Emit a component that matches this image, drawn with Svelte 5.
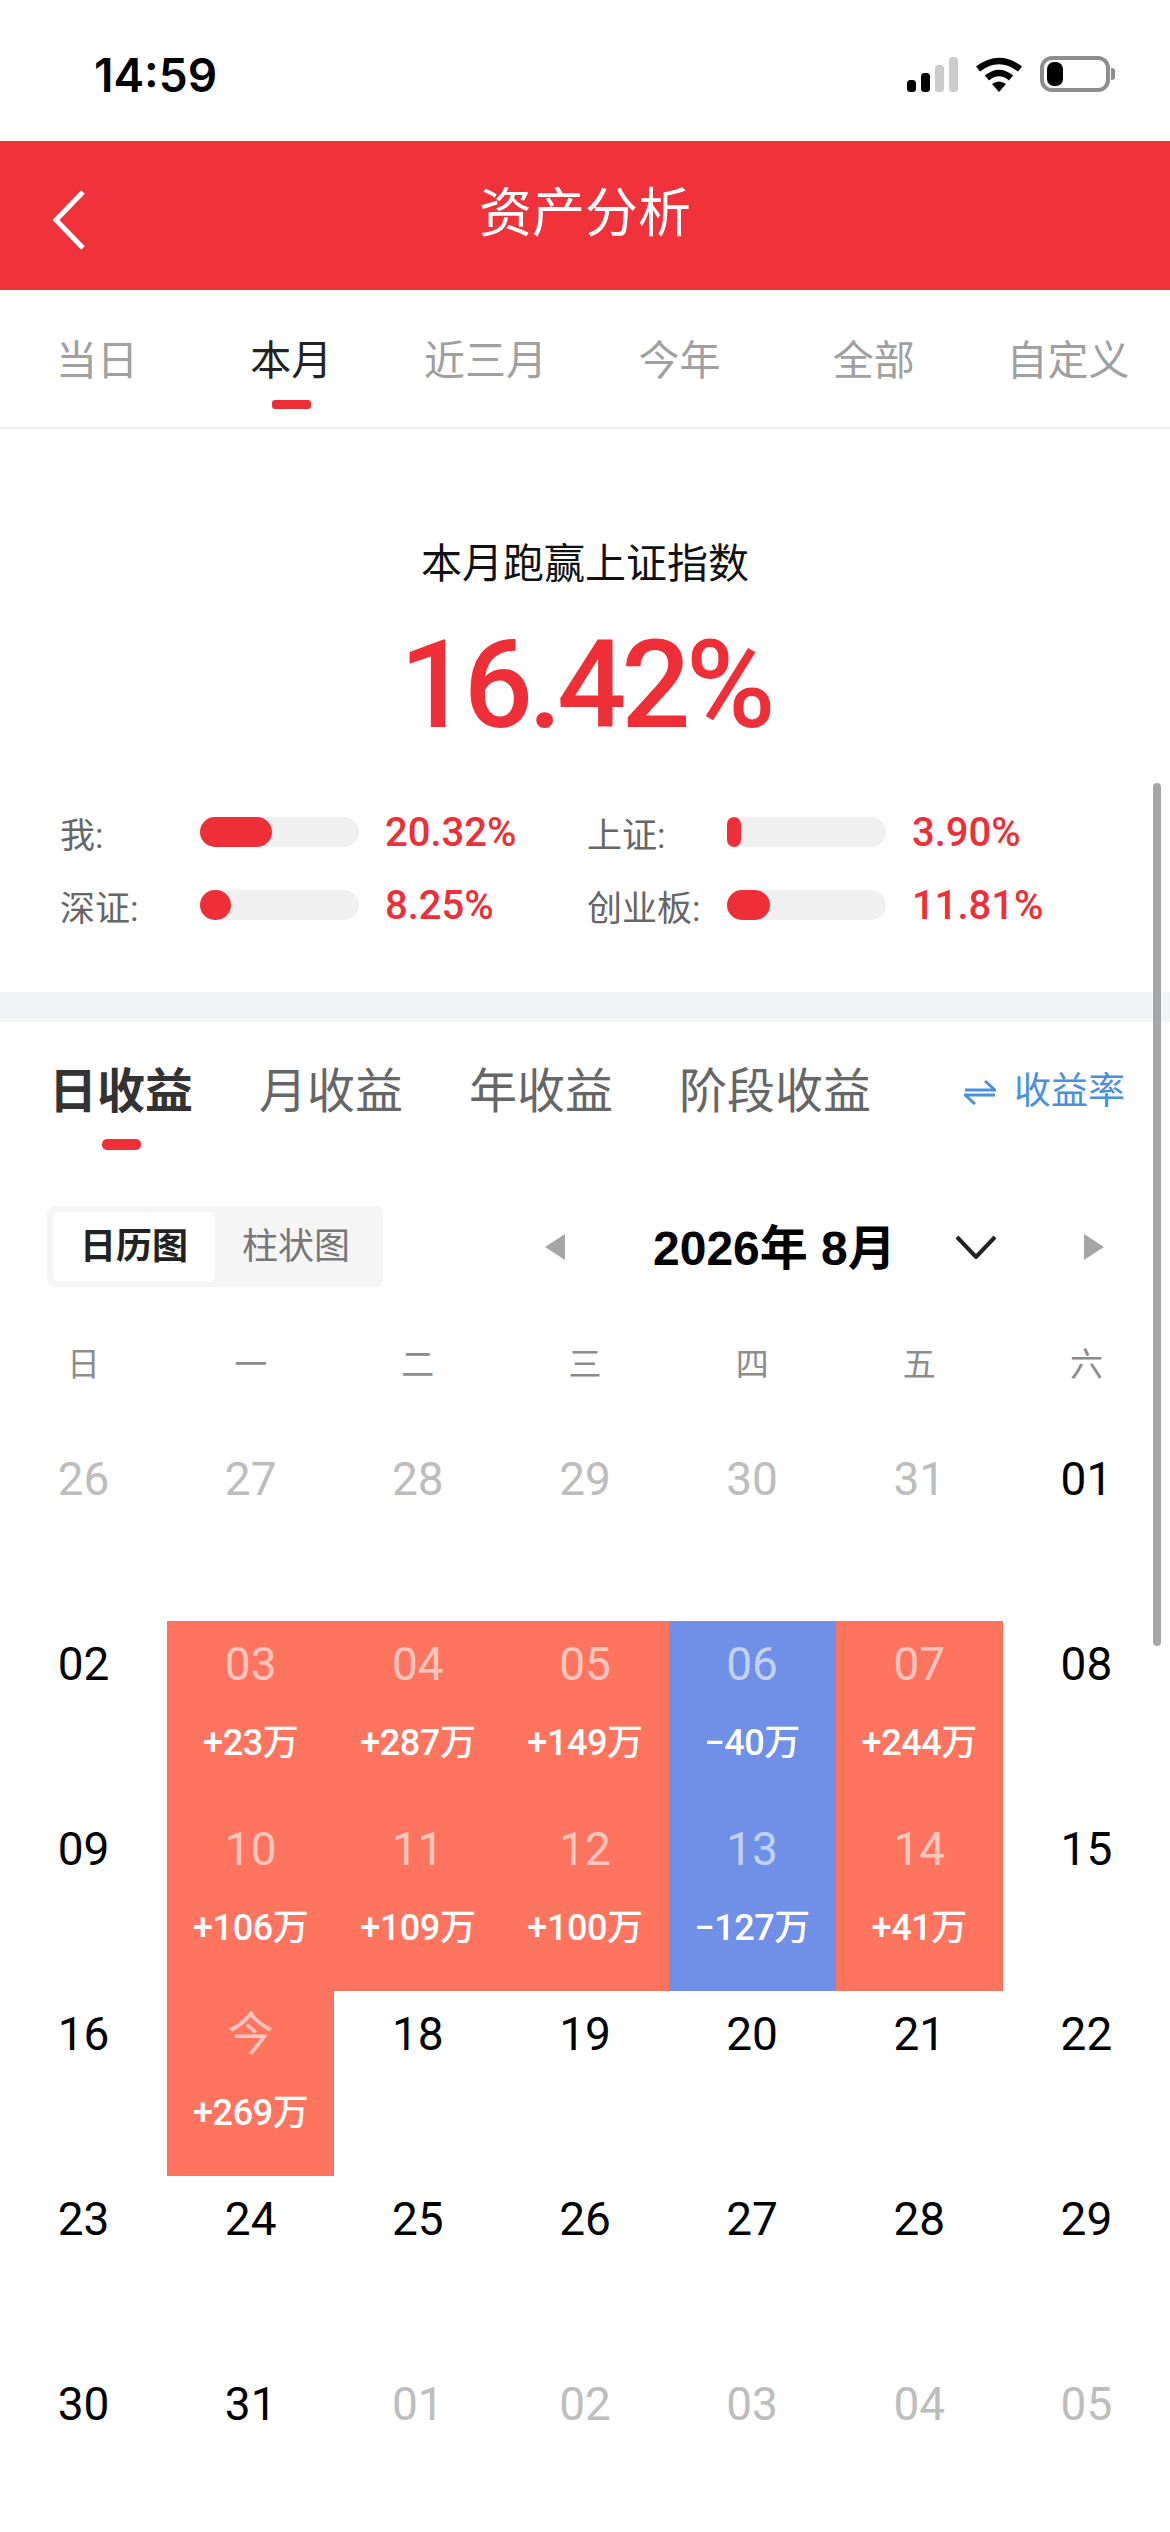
<script>
	const periods = ["当日", "本月", "近三月", "今年", "全部", "自定义"];
	const compare = [
		{ label: "我:", value: "20.32%", fill: 72 },
		{ label: "上证:", value: "3.90%", fill: 14 },
		{ label: "深证:", value: "8.25%", fill: 31 },
		{ label: "创业板:", value: "11.81%", fill: 43 },
	];
	const profitTabs = ["日收益", "月收益", "年收益", "阶段收益"];
	const weekdays = ["日", "一", "二", "三", "四", "五", "六"];

	const days = [
		{ d: "26", off: true }, { d: "27", off: true }, { d: "28", off: true }, { d: "29", off: true }, { d: "30", off: true }, { d: "31", off: true }, { d: "01" },
		{ d: "02" }, { d: "03", v: "+23万" }, { d: "04", v: "+287万" }, { d: "05", v: "+149万" }, { d: "06", v: "−40万", loss: true }, { d: "07", v: "+244万" }, { d: "08" },
		{ d: "09" }, { d: "10", v: "+106万" }, { d: "11", v: "+109万" }, { d: "12", v: "+100万" }, { d: "13", v: "−127万", loss: true }, { d: "14", v: "+41万" }, { d: "15" },
		{ d: "16" }, { d: "今", v: "+269万" }, { d: "18" }, { d: "19" }, { d: "20" }, { d: "21" }, { d: "22" },
		{ d: "23" }, { d: "24" }, { d: "25" }, { d: "26" }, { d: "27" }, { d: "28" }, { d: "29" },
		{ d: "30" }, { d: "31" }, { d: "01", off: true }, { d: "02", off: true }, { d: "03", off: true }, { d: "04", off: true }, { d: "05", off: true },
	];
</script>

<div class="page">
	<div class="status">
		<span class="time">14:59</span>
		<div class="status-icons">
			<svg width="51" height="35" viewBox="0 0 51 35">
				<rect x="0" y="23" width="9" height="12" rx="3.5" fill="#000" />
				<rect x="14" y="16" width="9" height="19" rx="3.5" fill="#000" />
				<rect x="28" y="8" width="9" height="27" rx="3.5" fill="#ccc" />
				<rect x="42" y="0" width="9" height="35" rx="3.5" fill="#ccc" />
			</svg>
			<svg class="wifi" width="48" height="37" viewBox="0 0 48 37">
				<path d="M3 13 Q24 -3 45 13" fill="none" stroke="#000" stroke-width="6.5" />
				<path d="M12 22 Q24 12 36 22" fill="none" stroke="#000" stroke-width="6.5" />
				<path d="M17 28 Q24 23 31 28 L24 36 Z" fill="#000" />
			</svg>
			<div class="battery"><div class="battery-level"></div></div>
			<div class="battery-nub"></div>
		</div>
	</div>

	<div class="nav">
		<svg class="back" width="34" height="60" viewBox="0 0 34 60">
			<path d="M31 2 L4 30 L31 58" fill="none" stroke="#fff" stroke-width="5" />
		</svg>
		<h1>资产分析</h1>
	</div>

	<div class="periods">
		{#each periods as p, i}
			<div class="period" class:active={i === 1}>{p}</div>
		{/each}
	</div>

	<div class="summary">
		<div class="summary-title">本月跑赢上证指数</div>
		<div class="big">16.42%</div>
		<div class="compare">
			{#each compare as c}
				<div class="compare-item">
					<span class="compare-label">{c.label}</span>
					<div class="track"><div class="fill" style="width: {c.fill}px"></div></div>
					<span class="compare-value">{c.value}</span>
				</div>
			{/each}
		</div>
	</div>

	<div class="band"></div>

	<div class="profit-tabs">
		{#each profitTabs as t, i}
			<div class="profit-tab" class:active={i === 0}>{t}</div>
		{/each}
		<div class="rate">
			<svg width="32" height="26" viewBox="0 0 32 26">
				<path d="M1 11 H31 L21 2" fill="none" stroke="#4a90e2" stroke-width="3" />
				<path d="M31 16 H1 L11 25" fill="none" stroke="#4a90e2" stroke-width="3" />
			</svg>
			<span>收益率</span>
		</div>
	</div>

	<div class="toolbar">
		<div class="switch">
			<div class="switch-on">日历图</div>
			<div class="switch-off">柱状图</div>
		</div>
		<div class="month">
			<svg width="20" height="26" viewBox="0 0 20 26"><path d="M20 0 V26 L0 13 Z" fill="#a6a6a6" /></svg>
			<span class="month-text">2026年 8月</span>
			<svg class="chevron" width="42" height="24" viewBox="0 0 42 24">
				<path d="M2 2 L21 22 L40 2" fill="none" stroke="#222" stroke-width="4" />
			</svg>
			<svg class="next" width="20" height="26" viewBox="0 0 20 26"><path d="M0 0 V26 L20 13 Z" fill="#a6a6a6" /></svg>
		</div>
	</div>

	<div class="weekdays">
		{#each weekdays as w}
			<div>{w}</div>
		{/each}
	</div>

	<div class="calendar">
		{#each days as day}
			<div class="day" class:off={day.off} class:gain={day.v && !day.loss} class:loss={day.loss}>
				<div class="day-num">{day.d}</div>
				{#if day.v}
					<div class="day-value">{day.v}</div>
				{/if}
			</div>
		{/each}
	</div>

	<div class="scrollbar"></div>
</div>

<style>
	:global(body) {
		margin: 0;
		background: #fff;
	}

	.page {
		position: relative;
		width: 1170px;
		height: 2532px;
		overflow: hidden;
		background: #fff;
		font-family: Roboto, "Noto Sans CJK SC", sans-serif;
	}

	.status {
		height: 141px;
		display: flex;
		align-items: center;
		justify-content: space-between;
		padding: 0 55px 0 94px;
		box-sizing: border-box;
	}
	.time {
		font-family: Inter, sans-serif;
		font-size: 46px;
		font-weight: 600;
		color: #000;
		margin-top: 8px;
	}
	.status-icons {
		display: flex;
		align-items: center;
		margin-top: 7px;
	}
	.wifi {
		margin-left: 17px;
	}
	.battery {
		width: 70px;
		height: 36px;
		margin-left: 17px;
		box-sizing: border-box;
		border: 4px solid #8e8e8e;
		border-radius: 12px;
		padding: 2px 3px;
	}
	.battery-level {
		width: 16px;
		height: 24px;
		background: #000;
		border-radius: 7px;
	}
	.battery-nub {
		width: 4px;
		height: 12px;
		margin-left: 1px;
		background: #8e8e8e;
		border-radius: 0 3px 3px 0;
	}

	.nav {
		position: relative;
		height: 149px;
		background: #f0323a;
		display: flex;
		align-items: center;
		justify-content: center;
	}
	.nav h1 {
		margin: 0;
		font-size: 53px;
		font-weight: 400;
		color: #fff;
		margin-top: -14px;
	}
	.back {
		position: absolute;
		left: 52px;
		top: 49px;
	}

	.periods {
		display: grid;
		grid-template-columns: repeat(6, 1fr);
		height: 139px;
		padding-right: 5px;
		border-bottom: 2px solid #eeeeee;
		box-sizing: border-box;
	}
	.period {
		position: relative;
		text-align: center;
		font-size: 41px;
		line-height: 46px;
		padding-top: 48px;
		color: #a0a0a0;
	}
	.period.active {
		color: #222;
	}
	.period.active::after {
		content: "";
		position: absolute;
		left: 78px;
		top: 110px;
		width: 39px;
		height: 9px;
		border-radius: 3px;
		background: #ee2f38;
	}

	.summary {
		height: 563px;
		box-sizing: border-box;
		padding-top: 112px;
	}
	.summary-title {
		text-align: center;
		font-size: 41px;
		line-height: 46px;
		color: #111;
	}
	.big {
		text-align: center;
		font-size: 122px;
		line-height: 120px;
		font-weight: 500;
		letter-spacing: -5px;
		color: #ee2f38;
		margin-top: 39px;
	}
	.compare {
		display: grid;
		grid-template-columns: 527px 527px;
		row-gap: 43px;
		padding-left: 60px;
		margin-top: 71px;
	}
	.compare-item {
		display: flex;
		align-items: center;
		height: 30px;
	}
	.compare-label {
		width: 140px;
		font-size: 35px;
		color: #666;
		white-space: nowrap;
	}
	.track {
		width: 159px;
		height: 30px;
		border-radius: 15px;
		background: #f0f0f0;
	}
	.fill {
		height: 100%;
		border-radius: 15px;
		background: #ee2f38;
	}
	.compare-value {
		margin-left: 26px;
		font-size: 40px;
		font-weight: 500;
		color: #ee2f38;
	}

	.band {
		height: 30px;
		background: #f3f4f6;
	}

	.profit-tabs {
		display: flex;
		align-items: flex-start;
		height: 184px;
		box-sizing: border-box;
		padding: 42px 45px 0 49px;
		gap: 66px;
	}
	.profit-tab {
		position: relative;
		font-size: 48px;
		line-height: 56px;
		color: #666;
	}
	.profit-tab.active {
		font-weight: 700;
		color: #333;
	}
	.profit-tab.active::after {
		content: "";
		position: absolute;
		left: 53px;
		top: 75px;
		width: 39px;
		height: 11px;
		border-radius: 5px;
		background: #ee2f38;
	}
	.rate {
		display: flex;
		align-items: center;
		gap: 18px;
		margin-left: auto;
		font-size: 37px;
		line-height: 56px;
		color: #4a90e2;
	}

	.toolbar {
		display: flex;
		align-items: center;
		height: 81px;
		padding-left: 47px;
	}
	.switch {
		display: flex;
		width: 336px;
		height: 81px;
		box-sizing: border-box;
		padding: 6px;
		border-radius: 8px;
		background: #f5f5f5;
		font-size: 36px;
		line-height: 70px;
	}
	.switch-on {
		width: 162px;
		height: 70px;
		text-align: center;
		background: #fff;
		border-radius: 6px;
		font-weight: 700;
		color: #222;
	}
	.switch-off {
		flex: 1;
		text-align: center;
		color: #777;
	}
	.month {
		display: flex;
		align-items: center;
		margin-left: 162px;
	}
	.month-text {
		width: 242px;
		margin-left: 88px;
		margin-top: -6px;
		font-family: "Liberation Sans", "Noto Sans CJK SC", sans-serif;
		font-size: 48px;
		font-weight: 700;
		white-space: nowrap;
		color: #000;
	}
	.chevron {
		margin-left: 60px;
	}
	.next {
		margin-left: 87px;
	}

	.weekdays {
		display: grid;
		grid-template-columns: repeat(7, 1fr);
		margin-top: 58px;
		text-align: center;
		font-size: 33px;
		line-height: 40px;
		color: #8c8c8c;
	}

	.calendar {
		display: grid;
		grid-template-columns: repeat(7, 1fr);
		grid-auto-rows: 185px;
		margin-top: 51px;
	}
	.day {
		text-align: center;
		padding-top: 17px;
		color: #000;
	}
	.day-num {
		font-size: 46px;
		line-height: 52px;
	}
	.day-value {
		margin-top: 31px;
		font-size: 36px;
		line-height: 44px;
		font-weight: 500;
		letter-spacing: -0.4px;
		color: #fff;
	}
	.day.off {
		color: #bdbdbd;
	}
	.day.gain {
		background: #ff745f;
	}
	.day.loss {
		background: #6f90e6;
	}
	.day.gain .day-num,
	.day.loss .day-num {
		color: rgba(255, 255, 255, 0.6);
	}

	.scrollbar {
		position: absolute;
		right: 9px;
		top: 783px;
		width: 8px;
		height: 863px;
		border-radius: 4px;
		background: #a6a6a6;
	}
</style>
